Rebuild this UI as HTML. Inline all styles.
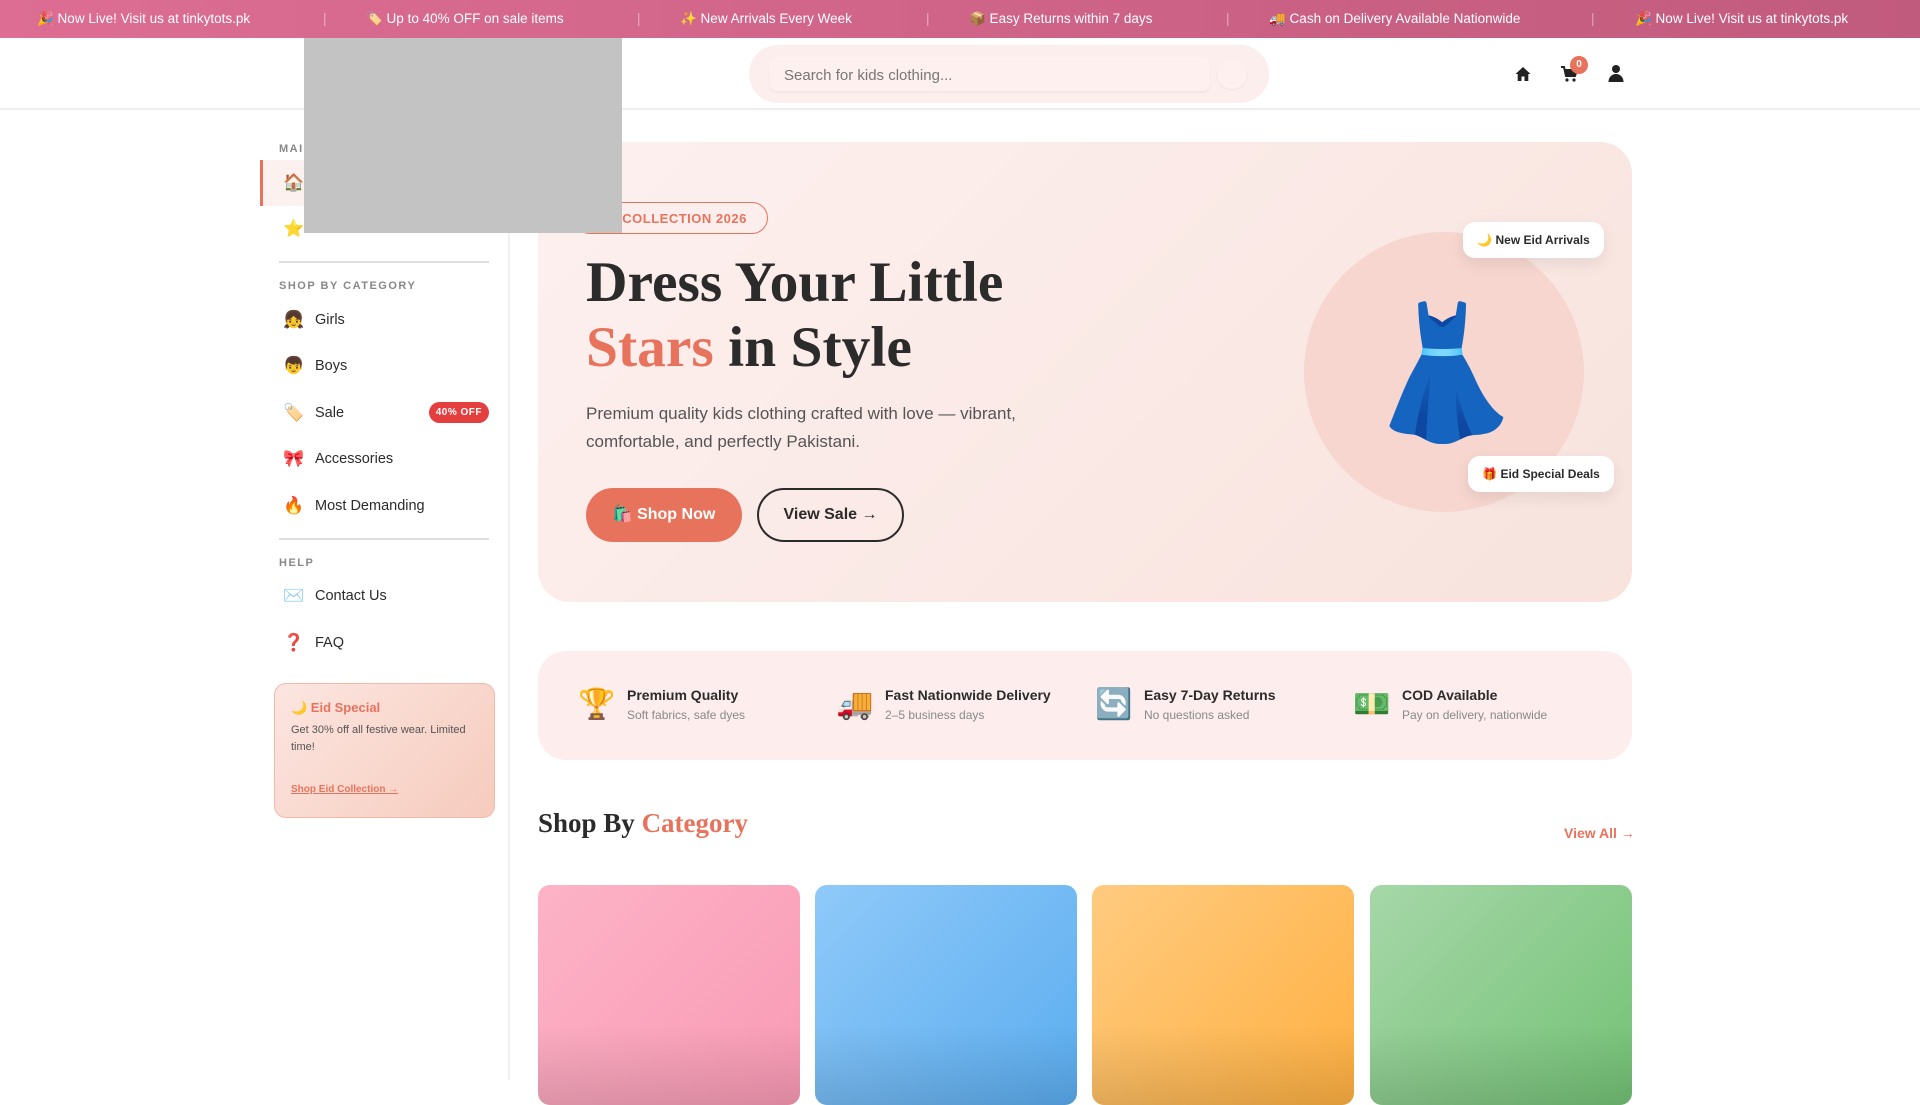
<!DOCTYPE html>
<html><head><meta charset="utf-8"><style>
*{margin:0;padding:0;box-sizing:border-box}
body{width:1920px;height:1080px;overflow:hidden;background:#fff;font-family:"Liberation Sans","Noto Sans CJK SC",sans-serif;color:#2b2b2b;position:relative}
.a{position:absolute}
.top{left:0;top:0;width:1920px;height:38px;background:linear-gradient(90deg,#dd6d93,#c15b7d);color:#fff;font-size:13.5px}
.top span{position:absolute;top:11px;white-space:nowrap}
.top i{position:absolute;top:11px;font-style:normal;color:rgba(255,255,255,.45)}
.hdr{left:0;top:38px;width:1920px;height:72px;border-bottom:2px solid #eee}
.search{left:749px;top:45px;width:520px;height:58px;border-radius:29px;background:#fdeeee}
.search .in{position:absolute;left:20px;top:12px;width:441px;height:34px;background:#fdf0ef;border-radius:8px;box-shadow:0 2px 2px rgba(0,0,0,.04);font-size:15px;color:#777;padding:10px 15px}
.search .bt{position:absolute;left:468px;top:14px;width:30px;height:30px;border-radius:50%;background:#fdf0ef;box-shadow:0 1px 2px rgba(0,0,0,.05)}
.gray{left:304px;top:38px;width:318px;height:195px;background:#c3c3c3;z-index:5}
.side{left:260px;top:110px;width:250px;height:970px;border-right:2px solid #f0f0f0}
.lab{font-size:11px;font-weight:bold;letter-spacing:1.5px;color:#888;position:absolute;left:19px}
.it{position:absolute;left:0;width:248px;height:46px;font-size:14.5px;color:#2b2b2b;display:flex;align-items:center;padding-left:23px}
.it b{font-weight:normal;width:32px;font-size:17px}
.act{background:#fdf1f0;border-left:3px solid #e8735c;padding-left:20px}
.div{position:absolute;left:19px;width:210px;height:2px;background:#ddd}
.hero{left:538px;top:142px;width:1094px;height:460px;border-radius:32px;background:linear-gradient(135deg,#fdf0ef,#f8e3dd)}
.badge{left:574px;top:202px;width:194px;height:32px;border:1.5px solid #e8735c;border-radius:16px;color:#e8735c;font-size:13px;font-weight:bold;padding:8px 0 0 20px;letter-spacing:.5px;white-space:nowrap}
h1{position:absolute;left:586px;top:250px;font-family:"Liberation Serif",serif;font-size:57.5px;line-height:65px;color:#2b2b2b;font-weight:bold;white-space:nowrap}
h1 em{font-style:normal;color:#e8735c}
.p{left:586px;top:400px;font-size:17px;line-height:28px;color:#555;width:460px}
.btn1{left:586px;top:488px;width:156px;height:54px;border-radius:27px;background:#e8735c;color:#fff;font-weight:bold;font-size:16px;text-align:center;line-height:54px}
.btn2{left:757px;top:488px;width:147px;height:54px;border-radius:27px;border:2px solid #2b2b2b;color:#2b2b2b;font-weight:bold;font-size:16px;text-align:center;line-height:50px}
.circ{left:1304px;top:232px;width:280px;height:280px;border-radius:50%;background:#f6d6cf;text-align:center;font-size:130px;line-height:280px}
.tag{background:#fff;border-radius:12px;box-shadow:0 6px 16px rgba(0,0,0,.08);font-size:12px;font-weight:bold;text-align:center}
.feat{left:538px;top:651px;width:1094px;height:109px;border-radius:28px;background:#fdeeed}
.f{position:absolute;top:36px}
.f .ic{position:absolute;left:0;top:0;font-size:30px}
.f .t{position:absolute;left:49px;top:0;font-size:14px;font-weight:bold;white-space:nowrap;color:#2b2b2b}
.f .s{position:absolute;left:49px;top:21px;font-size:12px;color:#888;white-space:nowrap}
h2{position:absolute;left:538px;top:808px;font-family:"Liberation Serif",serif;font-size:27px;font-weight:bold;color:#2b2b2b}
h2 em{font-style:normal;color:#e8735c}
.va{left:1564px;top:825px;font-size:14px;font-weight:bold;color:#e8735c}
.card{top:885px;width:262px;height:220px;border-radius:12px;overflow:hidden}
.card:after{content:"";position:absolute;left:0;right:0;bottom:0;height:80px;background:linear-gradient(180deg,rgba(0,0,0,0),rgba(0,0,0,.12))}
</style></head><body>
<div class="a top">
<span style="left:37px">🎉 Now Live! Visit us at tinkytots.pk</span><i style="left:323px">|</i>
<span style="left:366px">🏷️ Up to 40% OFF on sale items</span><i style="left:637px">|</i>
<span style="left:680px">✨ New Arrivals Every Week</span><i style="left:926px">|</i>
<span style="left:969px">📦 Easy Returns within 7 days</span><i style="left:1226px">|</i>
<span style="left:1269px">🚚 Cash on Delivery Available Nationwide</span><i style="left:1591px">|</i>
<span style="left:1635px">🎉 Now Live! Visit us at tinkytots.pk</span>
</div>
<div class="a hdr"></div>
<div class="a search"><div class="in">Search for kids clothing...</div><div class="bt"></div></div>
<svg class="a" style="left:1514px;top:65px" width="18" height="18" viewBox="0 0 18 18"><path d="M9 2L1.5 9h2.2v7h3.8v-4.5h3v4.5h3.8V9h2.2z" fill="#222"/></svg>
<svg class="a" style="left:1560px;top:65px" width="18" height="18" viewBox="0 0 18 18"><path d="M1 2h3l2 9h9l2-6H5" fill="none" stroke="#222" stroke-width="2"/><rect x="5" y="5" width="11" height="6" fill="#222"/><circle cx="7" cy="15" r="1.6" fill="#222"/><circle cx="14" cy="15" r="1.6" fill="#222"/></svg>
<div class="a" style="left:1570px;top:56px;width:18px;height:18px;border-radius:50%;background:#e8735c;color:#fff;font-size:10px;font-weight:bold;text-align:center;line-height:18px">0</div>
<svg class="a" style="left:1607px;top:64px" width="18" height="18" viewBox="0 0 18 18"><circle cx="9" cy="5" r="4" fill="#222"/><path d="M1.5 18c0-5 3.5-8 7.5-8s7.5 3 7.5 8z" fill="#222"/></svg>
<div class="a gray"></div>
<div class="a side">
<div class="lab" style="top:33px">MAIN</div>
<div class="it act" style="top:50px"><b>🏠</b>Home</div>
<div class="it" style="top:96px"><b>⭐</b>New Arrivals</div>
<div class="div" style="top:151px"></div>
<div class="lab" style="top:170px">SHOP BY CATEGORY</div>
<div class="it" style="top:187px"><b>👧</b>Girls</div>
<div class="it" style="top:233px"><b>👦</b>Boys</div>
<div class="it" style="top:280px"><b>🏷️</b>Sale<span style="position:absolute;right:19px;top:12px;background:#e53e3e;color:#fff;font-size:10px;font-weight:bold;border-radius:11px;padding:5px 7px;letter-spacing:.5px">40% OFF</span></div>
<div class="it" style="top:326px"><b>🎀</b>Accessories</div>
<div class="it" style="top:373px"><b>🔥</b>Most Demanding</div>
<div class="div" style="top:428px"></div>
<div class="lab" style="top:447px">HELP</div>
<div class="it" style="top:463px"><b>✉️</b>Contact Us</div>
<div class="it" style="top:510px"><b>❓</b>FAQ</div>
</div>
<div class="a" style="left:274px;top:683px;width:221px;height:135px;border-radius:12px;border:1px solid #f2b9a8;background:linear-gradient(135deg,#fce6e1,#f6cbbd);padding:16px">
<div style="color:#e8735c;font-weight:bold;font-size:13px">🌙 Eid Special</div>
<div style="font-size:11px;color:#555;line-height:17px;margin-top:6px">Get 30% off all festive wear. Limited time!</div>
<div style="font-size:10px;color:#e8735c;font-weight:bold;text-decoration:underline;margin-top:28px">Shop Eid Collection →</div>
</div>
<div class="a hero"></div>
<div class="a badge">EID COLLECTION 2026</div>
<h1>Dress Your Little<br><em>Stars</em> in Style</h1>
<div class="a p">Premium quality kids clothing crafted with love — vibrant, comfortable, and perfectly Pakistani.</div>
<div class="a btn1">🛍️ Shop Now</div>
<div class="a btn2">View Sale →</div>
<div class="a circ">👗</div>
<div class="a tag" style="left:1463px;top:222px;width:141px;height:36px;line-height:36px">🌙 New Eid Arrivals</div>
<div class="a tag" style="left:1468px;top:456px;width:146px;height:36px;line-height:36px">🎁 Eid Special Deals</div>
<div class="a feat">
<div class="f" style="left:40px"><div class="ic">🏆</div><div class="t">Premium Quality</div><div class="s">Soft fabrics, safe dyes</div></div>
<div class="f" style="left:298px"><div class="ic">🚚</div><div class="t">Fast Nationwide Delivery</div><div class="s">2–5 business days</div></div>
<div class="f" style="left:557px"><div class="ic">🔄</div><div class="t">Easy 7-Day Returns</div><div class="s">No questions asked</div></div>
<div class="f" style="left:815px"><div class="ic">💵</div><div class="t">COD Available</div><div class="s">Pay on delivery, nationwide</div></div>
</div>
<h2>Shop By <em>Category</em></h2>
<div class="a va">View All →</div>
<div class="a card" style="left:538px;background:linear-gradient(135deg,#fdb3c6,#f99ab5)"></div>
<div class="a card" style="left:815px;background:linear-gradient(135deg,#8fc9f9,#5badf0)"></div>
<div class="a card" style="left:1092px;background:linear-gradient(135deg,#ffcb80,#ffb041)"></div>
<div class="a card" style="left:1370px;background:linear-gradient(135deg,#a6d7a8,#74c276)"></div>
</body></html>
